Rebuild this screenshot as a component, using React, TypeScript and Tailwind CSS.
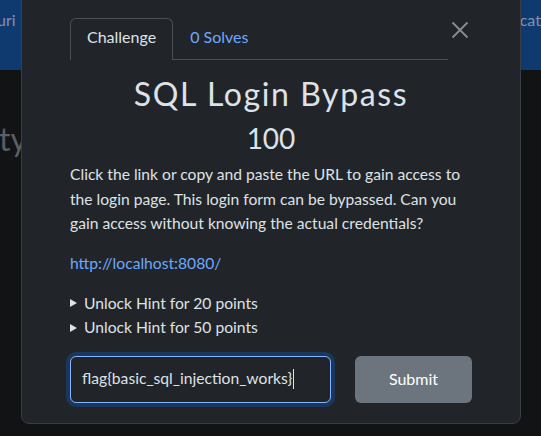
import React from "react";

export default function App() {
  return (
    <div className="relative w-[541px] h-[436px] overflow-hidden bg-[#121315] font-['Lato','Noto_Sans',sans-serif]">
      {/* page behind (dimmed) */}
      <div className="flex h-[70px] items-start justify-between bg-[#0f3a70] pt-[8px] text-[16px] text-[#8194ad]">
        <span className="ml-[-3px]">uri</span>
        <span className="mr-[-4px]">cati</span>
      </div>
      <div className="mt-[50px] ml-[-1px] text-[32px] leading-[38px] text-[#5b5e62]">ty</div>

      {/* modal */}
      <div className="absolute left-[21px] top-[-20px] w-[500px] h-[444px] rounded-b-[8px] border border-[#3a3d42] bg-[#212529] px-[48px] pt-[37px] text-[#dee2e6]">
        <div className="flex items-start">
          <div className="flex flex-1 h-[42px] border-b border-[#495057]">
            <div className="mb-[-1px] h-[42px] rounded-t-[6px] border border-b-0 border-[#495057] bg-[#212529] px-4 pt-[6px] text-[16px] leading-[24px] text-[#dee2e6]">
              Challenge
            </div>
            <div className="px-[17px] pt-[7px] text-[16px] leading-[24px] text-[#6ea8fe]">0 Solves</div>
          </div>
          <div className="flex w-[24px] justify-center pt-[3px]">
            <svg width="18" height="18" viewBox="0 0 18 18">
              <path d="M1.5 1.5 L16.5 16.5 M16.5 1.5 L1.5 16.5" stroke="#8a8d91" strokeWidth="1.8" fill="none" />
            </svg>
          </div>
        </div>

        <h2 className="mt-[15px] text-center text-[32px] leading-[38px] tracking-[1.6px] text-[#dee2e6]">SQL Login Bypass</h2>
        <h3 className="mt-[8px] text-center text-[28px] leading-[34px] text-[#dee2e6]">100</h3>

        <p className="mt-[7px] text-[15.65px] leading-[24.5px] text-[#dee2e6]">
          Click the link or copy and paste the URL to gain access to the login page. This login form can be bypassed. Can you gain access without knowing the actual credentials?
        </p>
        <p className="mt-[15px] text-[15.65px] leading-[24px] text-[#6ea8fe]">http://localhost:8080/</p>

        <div className="mt-[16px] flex flex-col">
          {["Unlock Hint for 20 points", "Unlock Hint for 50 points"].map((t) => (
            <div key={t} className="flex items-center text-[15.65px] leading-[24.5px] text-[#dee2e6]">
              <svg width="7" height="8" viewBox="0 0 7 8" className="mr-[7px] mt-[1px]">
                <path d="M0 0 L7 4 L0 8 Z" fill="#dee2e6" />
              </svg>
              {t}
            </div>
          ))}
        </div>

        <div className="mt-[16px] flex gap-6">
          <div className="flex h-[47px] w-[261px] items-center rounded-[6px] border border-[#86b7fe] bg-[#212529] px-3 text-[15.65px] text-[#dee2e6] shadow-[0_0_0_4px_rgba(13,110,253,0.25)]">
            <span className="ml-[-1px]">flag{"{"}basic_sql_injection_works{"}"}</span>
            <span className="ml-[1px] h-[20px] w-[1px] bg-[#dee2e6]" />
          </div>
          <div className="flex h-[47px] flex-1 items-center justify-center rounded-[6px] bg-[#6c757d] text-[16px] text-white">
            Submit
          </div>
        </div>
      </div>
    </div>
  );
}
